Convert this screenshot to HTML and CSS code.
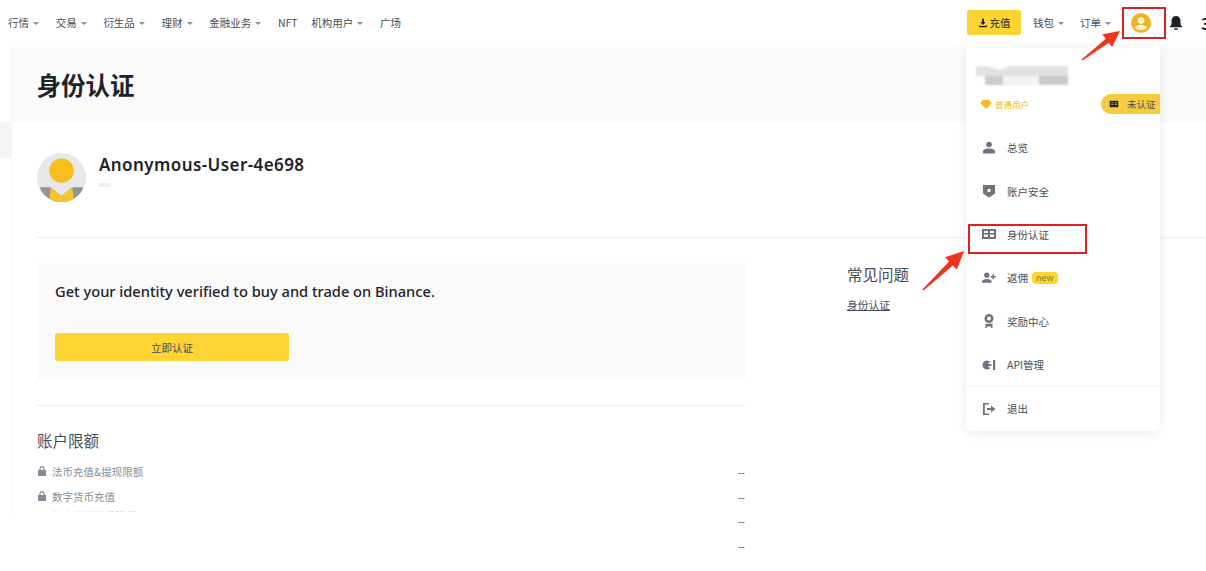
FILE: index.html
```html
<!DOCTYPE html>
<html lang="zh-CN">
<head>
<meta charset="utf-8">
<title>身份认证</title>
<link rel="stylesheet" href="styles.css">
</head>
<body>
<div class="page">
  <header class="topbar">
    <nav class="nav">
      <a class="nav-item">行情<i class="caret"></i></a>
      <a class="nav-item">交易<i class="caret"></i></a>
      <a class="nav-item">衍生品<i class="caret"></i></a>
      <a class="nav-item">理财<i class="caret"></i></a>
      <a class="nav-item">金融业务<i class="caret"></i></a>
      <a class="nav-item">NFT</a>
      <a class="nav-item">机构用户<i class="caret"></i></a>
      <a class="nav-item">广场</a>
    </nav>
    <div class="actions">
      <a class="deposit">
        <svg class="deposit-icon" viewBox="0 0 12 12"><path d="M4.800 1h2.400v4.200h2L6 8.400 2.800 5.200h2zM1.500 8.600h1.500v1h6v-1h1.500V11h-9z" fill="#1e2329"/></svg>充值
      </a>
      <a class="nav-item wallet">钱包<i class="caret"></i></a>
      <a class="nav-item orders">订单<i class="caret"></i></a>
      <svg class="user-icon" viewBox="0 0 20 20"><circle cx="10" cy="10" r="10" fill="#f0b323"/><circle cx="10" cy="7.600" r="3.300" fill="#fff3c9"/><path d="M3.800 14.800c1.200-2.200 3.600-3 6.200-3s5 .8 6.200 3c-1.500 1.400-3.600 2.200-6.200 2.200s-4.700-.8-6.200-2.200z" fill="#fff3c9"/></svg>
      <svg class="bell-icon" viewBox="0 0 14 16"><path d="M7 1c2.900 0 4.500 2.100 4.500 5v3.200L13 11.500v.8H1v-.8l1.500-2.300V6C2.500 3.100 4.100 1 7 1z" fill="#1e2329"/><path d="M5 13.300h4c0 1-.9 1.700-2 1.700s-2-.7-2-1.700z" fill="#1e2329"/></svg>
      <span class="edge-glyph">3</span>
    </div>
  </header>

  <div class="main">
    <aside class="rail"><div class="rail-mark"></div></aside>
    <main class="content">
      <div class="title-band"><h1>身份认证</h1></div>
      <section class="profile">
        <svg class="avatar" viewBox="0 0 50 50">
          <defs><clipPath id="avatar-clip"><circle cx="25" cy="25" r="25"/></clipPath></defs>
          <g clip-path="url(#avatar-clip)">
            <rect width="50" height="50" fill="#e6e8ea"/>
            <circle cx="25" cy="18" r="12.500" fill="#f8bc1c"/>
            <path d="M3 35h11l11 9 11-9h11l-4 15H7z" fill="#8f9499"/>
            <path d="M14 35l11 9 11-9 2 15H12z" fill="#f7c52f"/>
          </g>
        </svg>
        <div class="profile-text">
          <div class="user-name">Anonymous-User-4e698</div>
          <div class="user-sub"></div>
        </div>
      </section>

      <div class="columns">
        <div class="left-col">
          <section class="verify-card">
            <p class="verify-text">Get your identity verified to buy and trade on Binance.</p>
            <a class="verify-btn">立即认证</a>
          </section>
          <section class="limits">
            <h2>账户限额</h2>
            <div class="limit-grid">
              <div class="limit-labels">
                <div class="limit-label"><svg class="lock" viewBox="0 0 10 12"><path d="M2.500 5V3.500a2.500 2.500 0 0 1 5 0V5H9v6H1V5zM3.700 5h2.600V3.500a1.300 1.300 0 0 0-2.600 0z" fill="#858b94"/></svg>法币充值&amp;提现限额</div>
                <div class="limit-label"><svg class="lock" viewBox="0 0 10 12"><path d="M2.500 5V3.500a2.500 2.500 0 0 1 5 0V5H9v6H1V5zM3.700 5h2.600V3.500a1.300 1.300 0 0 0-2.600 0z" fill="#858b94"/></svg>数字货币充值</div>
                <div class="limit-label limit-cut">数字货币提现限额</div>
              </div>
              <div class="limit-values">
                <div>--</div><div>--</div><div>--</div><div>--</div>
              </div>
            </div>
          </section>
        </div>
        <aside class="faq">
          <h2>常见问题</h2>
          <a class="faq-link">身份认证</a>
        </aside>
      </div>
    </main>
  </div>

  <div class="menu">
    <div class="menu-head">
      <svg class="mosaic" viewBox="0 0 92 26"><path d="M0 4l10-1 14 4 10-4h58v10H0z" fill="#e2e2e2"/><rect x="9" y="13" width="18" height="9" fill="#cbcbcb"/><rect x="27" y="13" width="36" height="9" fill="#f3f3f3"/><rect x="63" y="13" width="29" height="9" fill="#c9c9c9"/></svg>
      <div class="menu-status">
        <span class="tier"><svg class="gem" viewBox="0 0 14 11"><path d="M3 0h8l3 4-7 7-7-7z" fill="#f5bd1f"/></svg>普通用户</span>
        <span class="badge"><svg class="badge-icon" viewBox="0 0 14 11"><path d="M1 1h12v9H1z" fill="#1e2329"/><path d="M3 3.500h3v1H3zM3 6h3v1H3zM8 3.500h3v1H8zM8 6h3v1H8z" fill="#f0c63a"/></svg>未认证</span>
      </div>
    </div>
    <a class="menu-item"><svg class="mi" viewBox="0 0 14 14"><circle cx="7" cy="3.500" r="2.800" fill="#6c7480"/><path d="M1 12.500v-2C1 8.500 3.500 7.500 7 7.500s6 1 6 3v2z" fill="#6c7480"/></svg>总览</a>
    <a class="menu-item"><svg class="mi" viewBox="0 0 14 14"><path fill-rule="evenodd" d="M1 1h12v8.500L7 13.500 1 9.500zM7 4.800a1.700 1.700 0 1 0 0 3.400 1.700 1.700 0 0 0 0-3.400z" fill="#6c7480"/></svg>账户安全</a>
    <a class="menu-item"><svg class="mi" viewBox="0 0 14 14"><path fill-rule="evenodd" d="M0 2h14v10H0zM2 4v2h4V4zM8 4v2h4V4zM2 7.500V10h4V7.500zM8 7.500V10h4V7.500z" fill="#6c7480"/></svg>身份认证</a>
    <a class="menu-item"><svg class="mi" viewBox="0 0 16 14"><circle cx="5.500" cy="3.800" r="3" fill="#6c7480"/><path d="M0 12.500V11C0 9 2.300 8 5.500 8s5.500 1 5.500 3v1.500z" fill="#6c7480"/><path d="M12 2.500h1.500v2.300H16v1.500h-2.500v2.200H12V6.300H9.800V4.800H12z" fill="#6c7480"/></svg>返佣<span class="new-tag">new</span></a>
    <a class="menu-item"><svg class="mi" viewBox="0 0 14 14"><path fill-rule="evenodd" d="M7 0a4.500 4.500 0 1 1 0 9 4.500 4.500 0 0 1 0-9zM7 2.500a2 2 0 1 0 0 4 2 2 0 0 0 0-4z" fill="#6c7480"/><path d="M3.500 9.800h7V14H9v-1.500H5V14H3.500z" fill="#6c7480"/></svg>奖励中心</a>
    <a class="menu-item"><svg class="mi" viewBox="0 0 14 14"><path d="M5 2.500a4.500 4.500 0 1 0 0 9c1.500 0 3-.7 3.800-2H6.500V8h2.800V6H6.500V4.500h2.300C8 3.200 6.500 2.500 5 2.500z" fill="#6c7480"/><rect x="11" y="2" width="2.200" height="10" fill="#6c7480"/></svg>API管理</a>
    <a class="menu-item menu-logout"><svg class="mi" viewBox="0 0 14 14"><path d="M1 1h6v1.600H2.800v8.800H7V13H1z" fill="#6c7480"/><path d="M9 3.500L13.500 7 9 10.500V8H5V6h4z" fill="#6c7480"/></svg>退出</a>
  </div>

  <div class="mark mark-user"></div>
  <div class="mark mark-id"></div>
  <svg class="arrows" viewBox="0 0 1206 571">
    <path d="M1081.500 59.400L1105.800 38.700 1102.400 34.300 1120 31 1112.200 47.100 1108.800 42.700 1082.500 60.600z" fill="#f0331c"/>
    <path d="M922.400 289.400L949.100 261.400 945.100 257.200 964 251 956.900 269.600 952.900 265.400 923.600 290.600z" fill="#f0331c"/>
  </svg>
</div>
</body>
</html>
```

FILE: styles.css
```css
* { box-sizing: border-box; }

html, body {
  margin: 0;
  padding: 0;
  background: #fff;
}

body {
  font-family: "Noto Sans CJK SC", "Noto Sans", sans-serif;
  color: #1e2329;
}

.page {
  position: relative;
  width: 1206px;
  height: 571px;
  overflow: hidden;
}

/* top bar */
.topbar {
  height: 47px;
  padding-left: 8px;
  display: flex;
  align-items: center;
  justify-content: space-between;
}

.nav {
  display: flex;
  gap: 13.700px;
  margin-top: -2px;
}

.nav-item {
  display: flex;
  align-items: center;
  flex: none;
  white-space: nowrap;
  font-size: 10.500px;
  line-height: 14px;
  color: #474d57;
}

.caret {
  width: 0;
  height: 0;
  margin: 1px 3px 0 4px;
  border-left: 3px solid transparent;
  border-right: 3px solid transparent;
  border-top: 3px solid #848e9c;
}

.actions {
  display: flex;
  align-items: center;
  width: 239px;
  flex: none;
  margin-top: -2px;
}

.deposit {
  width: 54px;
  height: 25px;
  background: #fcd535;
  border-radius: 2px;
  display: flex;
  align-items: center;
  justify-content: center;
  flex: none;
  white-space: nowrap;
  font-size: 10.500px;
  color: #1e2329;
}

.deposit-icon {
  width: 10px;
  height: 10px;
  margin-right: 2px;
}

.wallet { margin-left: 12px; }
.orders { margin-left: 13px; }

.user-icon {
  width: 20px;
  height: 20px;
  margin-left: 17px;
  flex: none;
}

.bell-icon {
  width: 14px;
  height: 16px;
  margin-left: 18px;
  flex: none;
}

.edge-glyph {
  margin-left: 18px;
  font-size: 16px;
  font-weight: 700;
  flex: none;
}

/* page body */
.main {
  display: flex;
  height: 467px;
  overflow: visible;
}

.rail {
  width: 12px;
  flex: none;
  padding-top: 75px;
  border-right: 1px solid #f7f7f7;
}

.rail-mark {
  height: 36px;
  background: #f5f5f5;
}

.content {
  flex: 1;
  min-width: 0;
}

.title-band {
  height: 75px;
  padding-left: 24.500px;
  background: #fafafa;
  display: flex;
  align-items: center;
}

h1 {
  margin: 0;
  font-size: 24.500px;
  font-weight: 700;
  line-height: 32px;
  color: #1e2329;
}

.profile {
  height: 116px;
  margin-left: 25px;
  padding-top: 30px;
  display: flex;
  gap: 13px;
  border-bottom: 1px solid #eeeeee;
}

.avatar {
  width: 49px;
  height: 49px;
  flex: none;
  margin-top: 1px;
}

.user-name {
  font-family: "Noto Sans", sans-serif;
  font-size: 17px;
  font-weight: 600;
  letter-spacing: .42px;
  line-height: 22px;
  margin-top: 2px;
  color: #1e2329;
}

.user-sub {
  width: 11px;
  height: 4px;
  margin-top: 7px;
  background: #eeeeee;
}

.columns {
  display: flex;
  padding: 25px 0 0 25px;
}

.left-col {
  width: 709px;
  flex: none;
}

.verify-card {
  height: 116px;
  padding: 17px 18px 18px;
  background: #fafafa;
}

.verify-text {
  margin: 0;
  font-family: "Noto Sans", sans-serif;
  font-size: 14.650px;
  font-weight: 500;
  line-height: 22px;
  color: #1e2329;
}

.verify-btn {
  width: 234px;
  height: 28px;
  margin-top: 31px;
  background: #fcd535;
  border-radius: 2px;
  display: flex;
  align-items: center;
  justify-content: center;
  font-size: 10.500px;
  color: #474d57;
}

.limits {
  margin-top: 26px;
  padding-top: 23px;
  border-top: 1px solid #eeeeee;
}

h2 {
  margin: 0;
  font-size: 15.500px;
  font-weight: 400;
  line-height: 22px;
  color: #474d57;
}

.limit-grid {
  display: flex;
  justify-content: space-between;
  margin-top: 8px;
}

.limit-labels {
  height: 53px;
  overflow: hidden;
}

.limit-label {
  height: 24.700px;
  display: flex;
  align-items: center;
  font-size: 10.500px;
  color: #848e9c;
}

.limit-cut {
  margin-top: -5px;
  padding-left: 15px;
  color: #f3a56a;
  opacity: .5;
}

.lock {
  width: 10px;
  height: 12px;
  margin-right: 5px;
}

.limit-values {
  font-size: 10.500px;
  color: #474d57;
  margin-right: 1px;
}

.limit-values div {
  height: 24.700px;
  display: flex;
  align-items: center;
}

.faq {
  margin-left: 101px;
}

.faq h2 {
  color: #474d57;
}

.faq-link {
  display: block;
  margin-top: 12px;
  font-size: 10.750px;
  line-height: 16px;
  color: #474d57;
  text-decoration: underline;
}

/* account dropdown */
.menu {
  position: absolute;
  left: 966px;
  top: 47px;
  width: 194px;
  height: 384px;
  background: #fff;
  border-radius: 0 0 6px 6px;
  box-shadow: 0 2px 12px rgba(0, 0, 0, .08);
}

.menu-head {
  height: 79px;
  padding-top: 16px;
}

.mosaic {
  display: block;
  width: 92px;
  height: 26px;
  margin-left: 10px;
  filter: blur(1px);
}

.menu-status {
  display: flex;
  align-items: center;
  justify-content: space-between;
  height: 20px;
  margin-top: 6px;
  transform: translateY(-1px);
}

.tier {
  display: flex;
  align-items: center;
  margin-left: 14px;
  font-size: 8.500px;
  color: #f0b90b;
}

.gem {
  width: 12px;
  height: 9px;
  margin-right: 3px;
}

.badge {
  width: 59px;
  height: 20px;
  padding-left: 8px;
  background: #f5cb3f;
  border-radius: 10px 0 0 10px;
  display: flex;
  align-items: center;
  font-size: 9.500px;
  color: #474d57;
}

.badge-icon {
  width: 10px;
  height: 8px;
  margin-right: 8px;
}

.menu-item {
  height: 43.400px;
  padding-left: 16px;
  display: flex;
  align-items: center;
  font-size: 10.500px;
  color: #474d57;
}

.mi {
  width: 14px;
  height: 14px;
  margin-right: 11px;
  flex: none;
}

.new-tag {
  height: 12px;
  margin-left: 4px;
  padding: 0 4px;
  border-radius: 4px;
  background: #fcd535;
  font-size: 9px;
  line-height: 12px;
  color: #8a7a2a;
}

.menu-logout {
  height: 44px;
  border-top: 1px solid #f3f3f3;
}

/* annotations over the screenshot */
.mark {
  position: absolute;
  border: 2px solid #e02020;
}

.mark-user {
  left: 1122px;
  top: 7px;
  width: 44px;
  height: 32px;
}

.mark-id {
  left: 968px;
  top: 224px;
  width: 119px;
  height: 30px;
}

.arrows {
  position: absolute;
  left: 0;
  top: 0;
  width: 1206px;
  height: 571px;
  pointer-events: none;
}
```
